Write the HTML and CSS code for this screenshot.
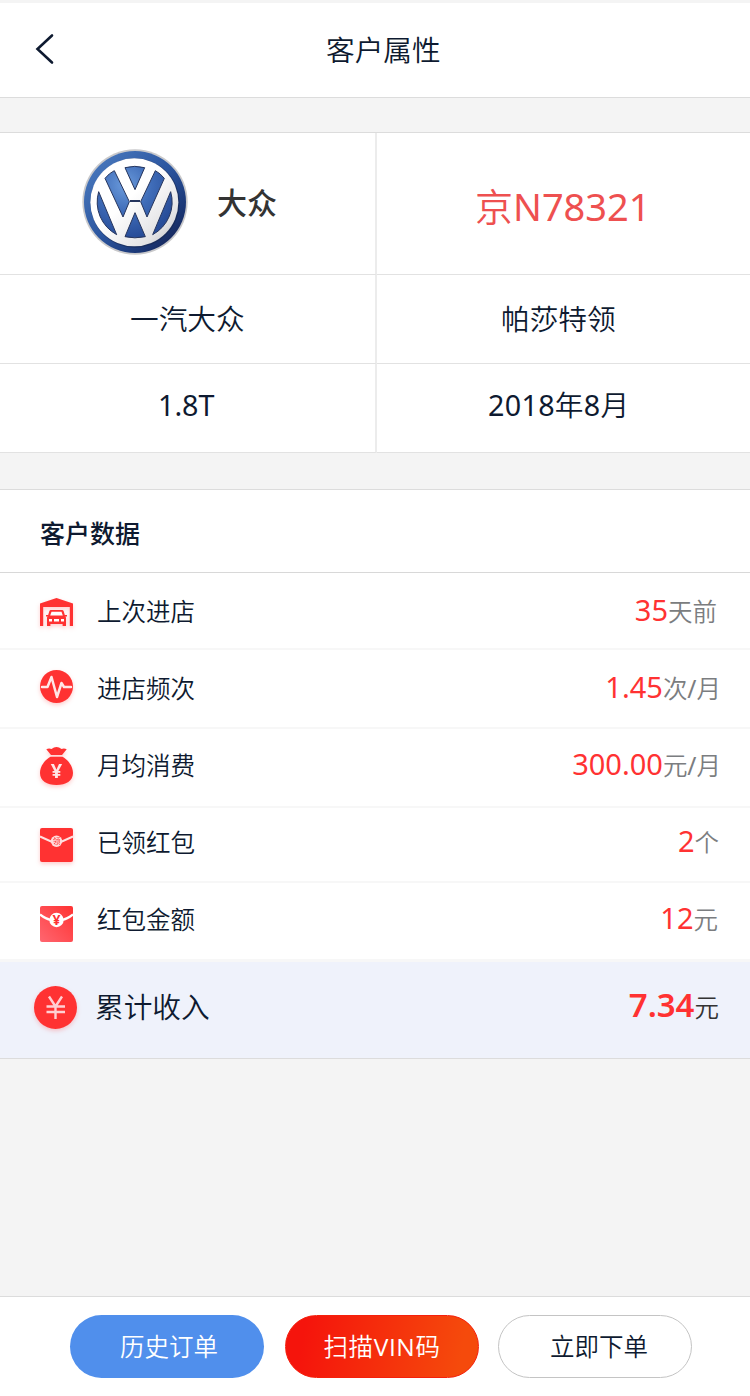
FILE: index.html
```html
<!DOCTYPE html>
<html lang="zh-CN">
<head>
<meta charset="utf-8">
<title>客户属性</title>
<link rel="stylesheet" href="styles.css">
</head>
<body>
<div class="page">
  <header class="header">
    <svg class="back" width="20" height="32" viewBox="0 0 20 32"><path d="M18 2.5 3.5 16 18 29.5"/></svg>
    <h1 class="title">客户属性</h1>
  </header>

  <section class="car">
    <div class="cell brand">
      <svg class="logo" width="106" height="106" viewBox="36 42 318 318">
        <defs>
          <linearGradient id="blue" x1="0" y1="0" x2="1" y2="1"><stop offset="0" stop-color="#4f80c4"/><stop offset=".5" stop-color="#2b559f"/><stop offset=".78" stop-color="#1a3573"/><stop offset="1" stop-color="#15183f"/></linearGradient>
          <linearGradient id="silver" x1="0" y1="0" x2="1" y2="1"><stop offset=".45" stop-color="#fff"/><stop offset=".8" stop-color="#e2e2e4"/><stop offset="1" stop-color="#b5b6bb"/></linearGradient>
          <radialGradient id="field" gradientUnits="userSpaceOnUse" cx="165" cy="150" r="160"><stop offset="0" stop-color="#6b9bdc"/><stop offset=".5" stop-color="#3f6cb8"/><stop offset="1" stop-color="#274c98"/></radialGradient>
        </defs>
        <circle cx="195" cy="201" r="158" fill="#c9c9cb"/>
        <circle cx="195" cy="201" r="153" fill="url(#blue)"/>
        <circle cx="195" cy="204" r="134" fill="#18264d" opacity=".6"/>
        <circle cx="193" cy="202" r="132" fill="url(#silver)"/>
        <g fill="url(#field)" stroke="#26355d" stroke-width="3">
          <path d="M165 98Q194 90 224 98L195 164Z"/>
          <path d="M105 130Q118 114 133 107L178 200 159 246Z"/>
          <path d="M283 130Q270 114 256 107L212 200 231 246Z"/>
          <path d="M195 233 165 305Q194 312 226 305Z"/>
          <path d="M86 170 140 299A111 111 0 0 1 86 170Z"/>
          <path d="M302 170 248 299A111 111 0 0 0 302 170Z"/>
          <path d="M180 198H210" stroke-width="6"/>
        </g>
      </svg>
      <span class="brand-name">大众</span>
    </div>
    <div class="cell plate">京N78321</div>
    <div class="cell maker">一汽大众</div>
    <div class="cell model">帕莎特领</div>
    <div class="cell engine">1.8T</div>
    <div class="cell date">2018年8月</div>
  </section>

  <section class="data">
    <h2 class="data-title">客户数据</h2>
    <div class="row visit">
      <svg class="icon" width="33" height="28" viewBox="0 0 33 28"><path fill="#ff3232" d="M0 5.5 16.5 0 33 5.5V28H29.8V9H3.2V28H0Z"/><path fill="#ff3232" d="M11 12H22Q23.2 12 23.6 13L24.8 17H27V18.5H25.4Q26 19 26 20V28H22.6V26H10.4V28H7V20Q7 19 7.6 18.5H6V17H8.2L9.4 13Q9.8 12 11 12Z"/><path fill="#fff" d="M11.5 13.8H21.5L22.8 17.6H10.2Z"/><path fill="#fff" d="M9 21h3v2.4H9zM21 21h3v2.4h-3zM14 21h5v2.4h-5z"/></svg>
      <span class="label">上次进店</span><span class="value"><b>35</b>天前</span>
    </div>
    <div class="row frequency">
      <svg class="icon" width="33" height="33" viewBox="0 0 33 33"><circle cx="16.5" cy="16.5" r="16.5" fill="#ff3232"/><path d="M2 17H7.5L11.5 7 17 27 21.5 13 24 17H31" fill="none" stroke="#ffe6e6" stroke-width="2.5" stroke-linecap="round" stroke-linejoin="round"/></svg>
      <span class="label">进店频次</span><span class="value"><b>1.45</b>次/月</span>
    </div>
    <div class="row spending">
      <svg class="icon" width="33" height="38" viewBox="0 0 33 38"><path fill="#ff3232" d="M6.3 2.2Q9 .8 11.5 2 14 0 16.5 0T21.5 2Q24 .8 26.7 2.2L22 8H11ZM10.5 9.8H22.5C28 13 33 19 33 26 33 34 26 38 16.5 38S0 34 0 26C0 19 5 13 10.5 9.8Z"/><text class="yen-bag" x="16.5" y="31" text-anchor="middle">¥</text></svg>
      <span class="label">月均消费</span><span class="value"><b>300.00</b>元/月</span>
    </div>
    <div class="row received">
      <svg class="icon" width="33" height="34" viewBox="0 0 33 34"><rect width="33" height="34" rx="2" fill="#ff3232"/><path d="M0 8.5 11 13.5H22L33 8.5" fill="none" stroke="#ffe0e0" stroke-width="2"/><circle cx="16.5" cy="13.3" r="5.7" fill="#ffdcdc"/><text class="seal" x="16.5" y="16.1" text-anchor="middle">领</text></svg>
      <span class="label">已领红包</span><span class="value"><b>2</b>个</span>
    </div>
    <div class="row amount">
      <svg class="icon flat" width="33" height="36" viewBox="0 0 33 36"><defs><linearGradient id="envelope" x1="1" y1="0" x2="0" y2="1"><stop offset="0" stop-color="#ff3232"/><stop offset="1" stop-color="#ff6670"/></linearGradient></defs><rect width="33" height="36" rx="2" fill="url(#envelope)"/><path d="M0 8.5Q6 13 11 14H22Q27 13 33 8.5" fill="none" stroke="#fff" stroke-width="2.2"/><circle cx="16.5" cy="14" r="7.2" fill="#fff"/><text class="yen-seal" x="16.5" y="19" text-anchor="middle">¥</text></svg>
      <span class="label">红包金额</span><span class="value"><b>12</b>元</span>
    </div>
    <div class="row total">
      <svg class="icon" width="43" height="43" viewBox="0 0 43 43"><circle cx="21.5" cy="21.5" r="21.5" fill="#ff3232"/><path d="M15 10.5 21.5 20.5 28 10.5M21.5 20.5V33M12.5 20.5H31M12.5 26H31" fill="none" stroke="#ffd0d3" stroke-width="2.4"/></svg>
      <span class="label">累计收入</span><span class="value"><b>7.34</b>元</span>
    </div>
  </section>

  <footer class="footer">
    <button class="btn history">历史订单</button>
    <button class="btn scan">扫描VIN码</button>
    <button class="btn order">立即下单</button>
  </footer>
</div>
</body>
</html>
```

FILE: styles.css
```css
* { box-sizing: border-box; }
body { margin: 0; background: #f4f4f4; }
.page {
  display: flex;
  flex-direction: column;
  width: 750px;
  height: 1396px;
  padding-top: 3px;
  font-family: "Noto Sans", "Noto Sans CJK SC DemiLight", "Noto Sans CJK SC", sans-serif;
  color: #0e1a30;
}
.header {
  display: flex;
  align-items: flex-start;
  height: 95px;
  padding-left: 34px;
  background: #fff;
  border-bottom: 1px solid #dcdcdc;
}
.back { margin-top: 30px; fill: none; stroke: #0e1a30; stroke-width: 2.6; stroke-linecap: round; }
.title { margin: 27px 0 0 272px; font-size: 28.7px; line-height: 40px; font-weight: 400; }

.car {
  display: grid;
  grid-template-columns: 377px 373px;
  grid-template-rows: 142px 89px 89px;
  margin-top: 34px;
  border-top: 1px solid #dcdcdc;
  background: #fff;
}
.cell { border-bottom: 1px solid #e2e2e2; font-size: 28.7px; line-height: 40px; white-space: nowrap; }
.cell:nth-child(odd) { border-right: 2px solid #ececec; }
.brand { display: flex; align-items: flex-start; padding: 16px 0 0 82px; }
.brand-name, .data-title { font-family: "Noto Sans", "Noto Sans CJK SC", sans-serif; }
.brand-name { margin: 34px 0 0 29px; font-size: 30px; font-weight: 500; color: #333; }
.plate { padding: 53px 0 0 98px; font-size: 38px; color: #ee5050; }
.maker { padding: 24px 0 0 130px; }
.model { padding: 24px 0 0 124px; }
.engine { padding: 21px 0 0 158px; }
.date { padding: 21px 0 0 111px; letter-spacing: .3px; }

.data { margin-top: 36px; border-top: 1px solid #dcdcdc; background: #fff; }
.data-title {
  height: 83px;
  margin: 0;
  padding: 23px 0 0 40px;
  border-bottom: 1px solid #d8d8d8;
  font-size: 25px;
  line-height: 40px;
  font-weight: 500;
}
.row { display: flex; align-items: flex-start; padding: 0 33px 0 40px; border-bottom: 2px solid #f7f7f7; line-height: 40px; }
.icon { flex: none; filter: drop-shadow(0 2px 2px rgba(255, 50, 50, .25)); overflow: visible; }
.flat { filter: none; }
.label { margin: 1px 0 0 24px; font-size: 24.5px; }
.value { margin: -1px 0 0 auto; font-size: 24.5px; color: #7b7d80; }
.value b { font-size: 29px; font-weight: 400; color: #ff3232; }
.visit { height: 77px; padding-top: 18px; }
.visit .icon { margin-top: 7px; }
.frequency { height: 79px; padding-top: 18px; padding-right: 29px; }
.frequency .icon { margin-top: 2px; }
.spending { height: 79px; padding-top: 16px; padding-right: 29px; }
.spending .icon { margin-top: 2px; }
.received { height: 75px; padding-top: 14px; padding-right: 31px; }
.received .icon { margin-top: 6px; }
.amount { height: 79px; padding-top: 16px; padding-right: 32px; border-bottom-width: 3px; }
.amount .icon { margin-top: 7px; }
.total { height: 97px; padding: 24px 31px 0 34px; background: #eff2fb; border-bottom: 1px solid #dcdcdc; }
.total .label { margin: 1px 0 0 18px; font-size: 28.7px; }
.total .value { color: #333; }
.total b { font-size: 33px; font-weight: 600; }
.yen-bag { font: 700 20px "Noto Sans", sans-serif; fill: #ffe6e6; }
.yen-seal { font: 700 14px "Noto Sans", sans-serif; fill: #ff3232; }
.seal { font: 400 7.5px "Noto Sans CJK SC", sans-serif; fill: #ff3232; }

.footer {
  display: flex;
  gap: 21px;
  height: 100px;
  margin-top: auto;
  padding: 18px 0 0 70px;
  border-top: 1px solid #dcdcdc;
  background: #fff;
}
.btn {
  width: 194px;
  height: 63px;
  padding: 0 0 2px 4px;
  border: 0;
  border-radius: 32px;
  font-family: "Open Sans", "Noto Sans CJK SC DemiLight", "Noto Sans CJK SC", sans-serif;
  font-size: 24.5px;
  white-space: nowrap;
  color: #fff;
}
.history { background: #508fec; }
.scan { padding-left: 0; background: linear-gradient(100deg, #f5140c 10%, #f54a0c 90%); letter-spacing: .6px; border: 1px solid #f5200c; }
.order { margin-left: -2px; padding-left: 8px; background: #fff; border: 1px solid #c4c4c4; color: #0e1a30; }
```
